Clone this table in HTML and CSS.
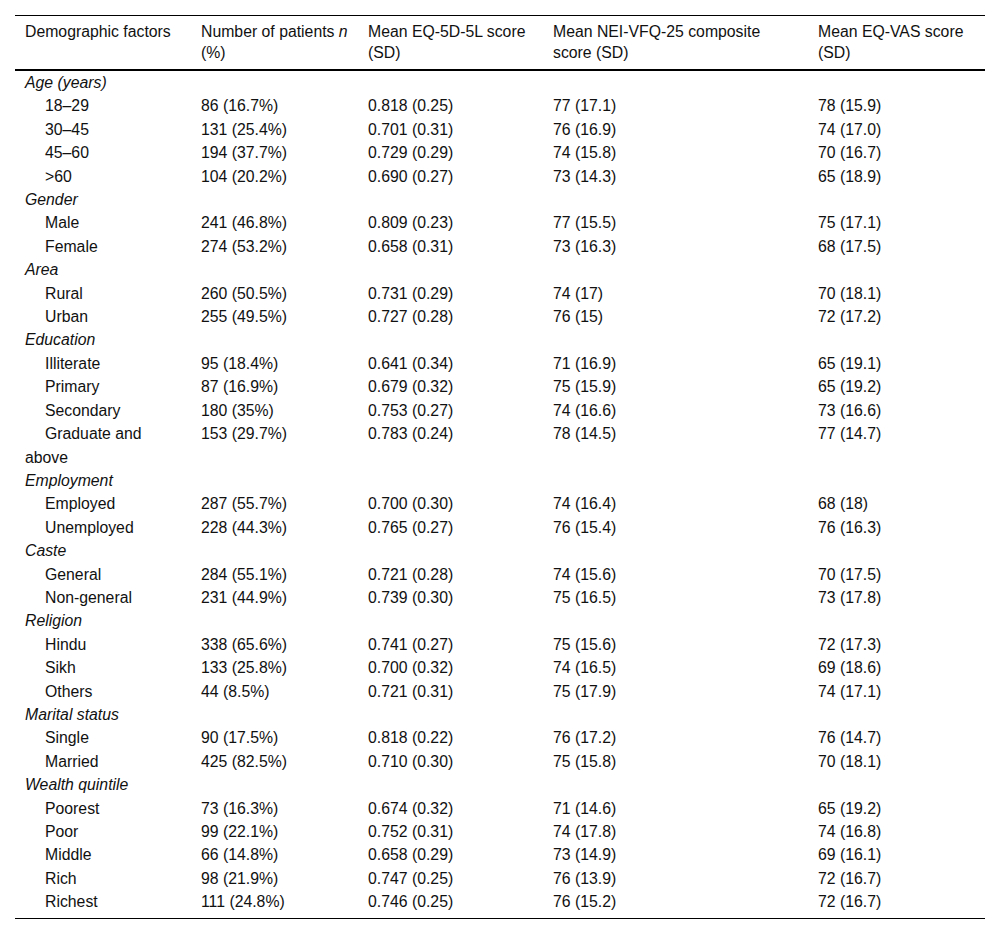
FILE: index.html
```html
<!DOCTYPE html>
<html>
<head>
<meta charset="utf-8">
<link rel="stylesheet" href="styles.css">
</head>
<body>
<table class="data">
<colgroup>
<col class="c1"><col class="c2"><col class="c3"><col class="c4"><col class="c5">
</colgroup>
<thead>
<tr><th>Demographic factors</th><th>Number of patients <i>n</i> (%)</th><th>Mean EQ-5D-5L score (SD)</th><th>Mean NEI-VFQ-25 composite score (SD)</th><th>Mean EQ-VAS score (SD)</th></tr>
</thead>
<tbody>
<tr class="grp"><td colspan="5">Age (years)</td></tr>
<tr><td class="sub">18–29</td><td>86 (16.7%)</td><td>0.818 (0.25)</td><td>77 (17.1)</td><td>78 (15.9)</td></tr>
<tr><td class="sub">30–45</td><td>131 (25.4%)</td><td>0.701 (0.31)</td><td>76 (16.9)</td><td>74 (17.0)</td></tr>
<tr><td class="sub">45–60</td><td>194 (37.7%)</td><td>0.729 (0.29)</td><td>74 (15.8)</td><td>70 (16.7)</td></tr>
<tr><td class="sub">&gt;60</td><td>104 (20.2%)</td><td>0.690 (0.27)</td><td>73 (14.3)</td><td>65 (18.9)</td></tr>
<tr class="grp"><td colspan="5">Gender</td></tr>
<tr><td class="sub">Male</td><td>241 (46.8%)</td><td>0.809 (0.23)</td><td>77 (15.5)</td><td>75 (17.1)</td></tr>
<tr><td class="sub">Female</td><td>274 (53.2%)</td><td>0.658 (0.31)</td><td>73 (16.3)</td><td>68 (17.5)</td></tr>
<tr class="grp"><td colspan="5">Area</td></tr>
<tr><td class="sub">Rural</td><td>260 (50.5%)</td><td>0.731 (0.29)</td><td>74 (17)</td><td>70 (18.1)</td></tr>
<tr><td class="sub">Urban</td><td>255 (49.5%)</td><td>0.727 (0.28)</td><td>76 (15)</td><td>72 (17.2)</td></tr>
<tr class="grp"><td colspan="5">Education</td></tr>
<tr><td class="sub">Illiterate</td><td>95 (18.4%)</td><td>0.641 (0.34)</td><td>71 (16.9)</td><td>65 (19.1)</td></tr>
<tr><td class="sub">Primary</td><td>87 (16.9%)</td><td>0.679 (0.32)</td><td>75 (15.9)</td><td>65 (19.2)</td></tr>
<tr><td class="sub">Secondary</td><td>180 (35%)</td><td>0.753 (0.27)</td><td>74 (16.6)</td><td>73 (16.6)</td></tr>
<tr><td class="sub">Graduate and above</td><td>153 (29.7%)</td><td>0.783 (0.24)</td><td>78 (14.5)</td><td>77 (14.7)</td></tr>
<tr class="grp"><td colspan="5">Employment</td></tr>
<tr><td class="sub">Employed</td><td>287 (55.7%)</td><td>0.700 (0.30)</td><td>74 (16.4)</td><td>68 (18)</td></tr>
<tr><td class="sub">Unemployed</td><td>228 (44.3%)</td><td>0.765 (0.27)</td><td>76 (15.4)</td><td>76 (16.3)</td></tr>
<tr class="grp"><td colspan="5">Caste</td></tr>
<tr><td class="sub">General</td><td>284 (55.1%)</td><td>0.721 (0.28)</td><td>74 (15.6)</td><td>70 (17.5)</td></tr>
<tr><td class="sub">Non-general</td><td>231 (44.9%)</td><td>0.739 (0.30)</td><td>75 (16.5)</td><td>73 (17.8)</td></tr>
<tr class="grp"><td colspan="5">Religion</td></tr>
<tr><td class="sub">Hindu</td><td>338 (65.6%)</td><td>0.741 (0.27)</td><td>75 (15.6)</td><td>72 (17.3)</td></tr>
<tr><td class="sub">Sikh</td><td>133 (25.8%)</td><td>0.700 (0.32)</td><td>74 (16.5)</td><td>69 (18.6)</td></tr>
<tr><td class="sub">Others</td><td>44 (8.5%)</td><td>0.721 (0.31)</td><td>75 (17.9)</td><td>74 (17.1)</td></tr>
<tr class="grp"><td colspan="5">Marital status</td></tr>
<tr><td class="sub">Single</td><td>90 (17.5%)</td><td>0.818 (0.22)</td><td>76 (17.2)</td><td>76 (14.7)</td></tr>
<tr><td class="sub">Married</td><td>425 (82.5%)</td><td>0.710 (0.30)</td><td>75 (15.8)</td><td>70 (18.1)</td></tr>
<tr class="grp"><td colspan="5">Wealth quintile</td></tr>
<tr><td class="sub">Poorest</td><td>73 (16.3%)</td><td>0.674 (0.32)</td><td>71 (14.6)</td><td>65 (19.2)</td></tr>
<tr><td class="sub">Poor</td><td>99 (22.1%)</td><td>0.752 (0.31)</td><td>74 (17.8)</td><td>74 (16.8)</td></tr>
<tr><td class="sub">Middle</td><td>66 (14.8%)</td><td>0.658 (0.29)</td><td>73 (14.9)</td><td>69 (16.1)</td></tr>
<tr><td class="sub">Rich</td><td>98 (21.9%)</td><td>0.747 (0.25)</td><td>76 (13.9)</td><td>72 (16.7)</td></tr>
<tr class="last"><td class="sub">Richest</td><td>111 (24.8%)</td><td>0.746 (0.25)</td><td>76 (15.2)</td><td>72 (16.7)</td></tr>
</tbody>
</table>
</body>
</html>
```

FILE: styles.css
```css
html, body {
  margin: 0;
  padding: 0;
  background: #fff;
}
body {
  font-family: "Liberation Sans", Arial, sans-serif;
  font-size: 15.8px;
  color: #111;
}
.data {
  margin: 15px 0 0 15px;
  width: 970px;
  border-collapse: collapse;
  table-layout: fixed;
  border-top: 1px solid #000;
  border-bottom: 1px solid #000;
}
.c1 { width: 176px; }
.c2 { width: 167px; }
.c3 { width: 185px; }
.c4 { width: 265px; }
.c5 { width: 177px; }
.data th {
  font-weight: normal;
  text-align: left;
  vertical-align: top;
  line-height: 21px;
  padding: 5px 10px 6px 10px;
  border-bottom: 2px solid #000;
}
.data td {
  vertical-align: top;
  line-height: 23.4px;
  padding: 0 4px 0 10px;
}
.data tbody tr:first-child td { padding-top: 0; }
.data .grp td { font-style: italic; }
.data td.sub { text-indent: 20px; }
.data tr.last td { padding-bottom: 4px; }
.data tr.sub-wrap td { line-height: 23px; }
```
